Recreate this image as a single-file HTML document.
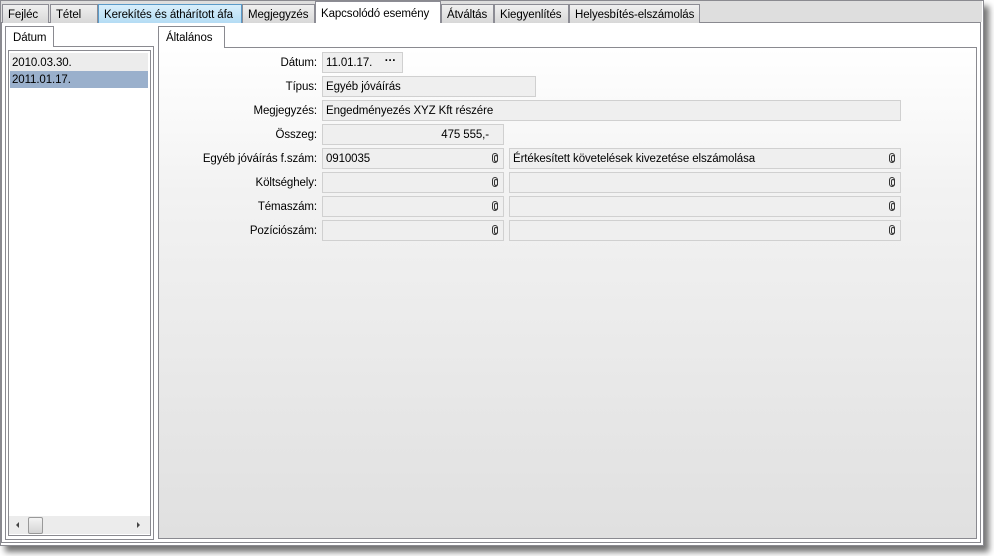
<!DOCTYPE html><html><head><meta charset="utf-8"><style>
*{box-sizing:border-box;margin:0;padding:0}
body{width:994px;height:556px;background:#fff;font-family:"Liberation Sans",sans-serif;font-size:11.5px;letter-spacing:-0.1px;color:#000;position:relative;overflow:hidden}
.a{position:absolute}
.win{left:0;top:0;width:984px;height:546px;background:#fff;border:1px solid #8a8a90;box-shadow:5px 6px 6px rgba(0,0,0,.55)}
.bar{left:1px;top:1px;width:981px;height:21px;background:#dedede}
.tab{top:4px;height:19px;border:1px solid #8c8c94;border-bottom:none;background:linear-gradient(#f0f0f0,#d8d8d8);padding:4px 0 0 5px;white-space:nowrap;overflow:hidden}
.lbl{right:677px;text-align:right;white-space:nowrap}
.f{height:21px;border:1px solid #d0d0d0;background:#efefef;padding:4px 0 0 3px;white-space:nowrap}
.clip{position:absolute;right:5px;top:4px;width:6px;height:10px;border:1.5px solid #333;border-radius:3px}
.clip:after{content:"";position:absolute;left:0.5px;top:1px;width:2px;height:5px;border:1px solid #333;border-radius:2px}
</style></head><body>
<div class="a win"></div>
<div class="a bar"></div>
<div class="a" style="left:1px;top:22px;width:980px;height:521px;border:1px solid #8a8a90;background:#fff"></div>
<div class="a tab" style="left:2px;width:47px">Fejléc</div>
<div class="a tab" style="left:50px;width:48px">Tétel</div>
<div class="a tab" style="left:98px;width:144px;background:linear-gradient(#d8effc,#b4dcf4);border-color:#5a9ac8">Kerekítés és áthárított áfa</div>
<div class="a tab" style="left:242px;width:73px">Megjegyzés</div>
<div class="a tab" style="left:315px;top:1px;height:22px;width:126px;background:#fff;padding-top:6px">Kapcsolódó esemény</div>
<div class="a tab" style="left:441px;width:53px">Átváltás</div>
<div class="a tab" style="left:494px;width:75px">Kiegyenlítés</div>
<div class="a tab" style="left:569px;width:131px">Helyesbítés-elszámolás</div>

<div class="a" style="left:5px;top:46px;width:149px;height:494px;border:1px solid #8a8a90"></div>
<div class="a" style="left:5px;top:26px;width:49px;height:21px;border:1px solid #8a8a90;border-bottom:none;background:#fff;padding:5px 0 0 7px">Dátum</div>
<div class="a" style="left:8px;top:50px;width:143px;height:486px;border:1px solid #8a8a90;background:#fff"></div>
<div class="a" style="left:10px;top:53px;width:138px;height:18px;background:#ececec;padding:4px 0 0 2px">2010.03.30.</div>
<div class="a" style="left:10px;top:71px;width:138px;height:17px;background:#9ab0cc;padding:3px 0 0 2px">2011.01.17.</div>
<div class="a" style="left:9px;top:516px;width:141px;height:18px;background:#ececec"></div>
<div class="a" style="left:16px;top:522px;width:0;height:0;border:3px solid transparent;border-right:3px solid #444;border-left:none"></div>
<div class="a" style="left:137px;top:522px;width:0;height:0;border:3px solid transparent;border-left:3px solid #444;border-right:none"></div>
<div class="a" style="left:28px;top:517px;width:15px;height:17px;border:1px solid #999;border-radius:2px;background:linear-gradient(#f4f4f4,#d4d4d4)"></div>

<div class="a" style="left:158px;top:47px;width:819px;height:492px;border:1px solid #8a8a90;background:linear-gradient(#fff 0%,#f2f2f2 30%,#e0e0e0 100%)"></div>
<div class="a" style="left:158px;top:26px;width:67px;height:22px;border:1px solid #8a8a90;border-bottom:none;background:#fff;padding:5px 0 0 7px">Általános</div>

<div class="a lbl" style="top:57px">Dátum:</div>
<div class="a f" style="left:322px;top:52px;width:81px">11.01.17.<span style="position:absolute;right:6px;top:2px;font-weight:bold">···</span></div>
<div class="a lbl" style="top:81px">Típus:</div>
<div class="a f" style="left:322px;top:76px;width:214px">Egyéb jóváírás</div>
<div class="a lbl" style="top:105px">Megjegyzés:</div>
<div class="a f" style="left:322px;top:100px;width:579px">Engedményezés XYZ Kft részére</div>
<div class="a lbl" style="top:129px">Összeg:</div>
<div class="a f" style="left:322px;top:124px;width:182px;text-align:right;padding-right:14px">475 555,-</div>

<div class="a lbl" style="top:153px">Egyéb jóváírás f.szám:</div>
<div class="a f" style="left:322px;top:148px;width:182px">0910035<i class="clip"></i></div>
<div class="a f" style="left:509px;top:148px;width:392px">Értékesített követelések kivezetése elszámolása<i class="clip"></i></div>
<div class="a lbl" style="top:177px">Költséghely:</div>
<div class="a f" style="left:322px;top:172px;width:182px"><i class="clip"></i></div>
<div class="a f" style="left:509px;top:172px;width:392px"><i class="clip"></i></div>
<div class="a lbl" style="top:201px">Témaszám:</div>
<div class="a f" style="left:322px;top:196px;width:182px"><i class="clip"></i></div>
<div class="a f" style="left:509px;top:196px;width:392px"><i class="clip"></i></div>
<div class="a lbl" style="top:225px">Pozíciószám:</div>
<div class="a f" style="left:322px;top:220px;width:182px"><i class="clip"></i></div>
<div class="a f" style="left:509px;top:220px;width:392px"><i class="clip"></i></div>
</body></html>
